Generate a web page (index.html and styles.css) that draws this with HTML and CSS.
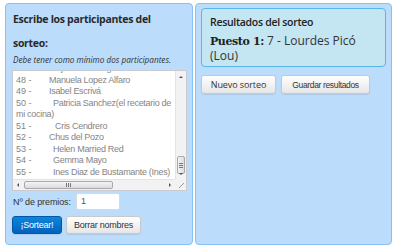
FILE: index.html
```html
<!DOCTYPE html>
<html lang="es">
<head>
<meta charset="utf-8">
<link rel="stylesheet" href="styles.css">
</head>
<body>
<div class="page">
  <section class="panel left">
    <h2 class="title">Escribe los participantes del sorteo:</h2>
    <p class="hint">Debe tener como mínimo dos participantes.</p>
    <div class="textarea">
      <div class="lines">
        <div class="ln"><span class="num">47 -</span><span class="nm">Alejandra Rodriguez Fernandez</span></div>
        <div class="ln"><span class="num">48 -</span><span class="nm">Manuela Lopez Alfaro</span></div>
        <div class="ln"><span class="num">49 -</span><span class="nm">Isabel Escrivá</span></div>
        <div class="ln"><span class="num">50 -</span><span class="nm n2">Patricia Sanchez(el recetario de</span></div>
        <div class="ln">mi cocina)</div>
        <div class="ln"><span class="num">51 -</span><span class="nm n3">Cris Cendrero</span></div>
        <div class="ln"><span class="num">52 -</span><span class="nm">Chus del Pozo</span></div>
        <div class="ln"><span class="num">53 -</span><span class="nm n2">Helen Married Red</span></div>
        <div class="ln"><span class="num">54 -</span><span class="nm n2">Gemma Mayo</span></div>
        <div class="ln"><span class="num">55 -</span><span class="nm n2">Ines Diaz de Bustamante (Ines)</span></div>
      </div>
      <div class="vbar">
        <span class="arr up"></span>
        <span class="vthumb"><i></i><i></i><i></i></span>
        <span class="arr down"></span>
      </div>
      <div class="hbar">
        <span class="arr lft"></span>
        <span class="hthumb"><i></i><i></i><i></i></span>
        <span class="arr rgt"></span>
      </div>
      <div class="corner"></div>
    </div>
    <div class="prizes">
      <label class="plabel">Nº de premios:</label>
      <div class="input">1</div>
    </div>
    <div class="actions">
      <button class="btn primary">¡Sortear!</button>
      <button class="btn b3">Borrar nombres</button>
    </div>
  </section>
  <section class="panel right">
    <div class="result">
      <h3 class="rtitle">Resultados del sorteo</h3>
      <p class="rline"><b>Puesto 1:</b> 7 - Lourdes Picó (Lou)</p>
    </div>
    <div class="ractions">
      <button class="btn b2">Nuevo sorteo</button>
      <button class="btn b4">Guardar resultados</button>
    </div>
  </section>
</div>
</body>
</html>
```
FILE: styles.css
```css
* { box-sizing: border-box; }
html, body { margin: 0; padding: 0; background: #fff; }
body { font-family: "Liberation Sans", Arial, sans-serif; }
.page {
  display: flex;
  gap: 2px;
  padding: 3px 0 0 5px;
  width: 400px;
  height: 252px;
}
.panel {
  background: #bcdcfb;
  border: 1px solid #86c0f4;
  border-radius: 4px;
  height: 242px;
}
.left { width: 188px; padding: 3px 6px 0 6px; }
.right { width: 197px; padding: 4px 5px 0 5px; }
.title {
  margin: 0;
  width: 150px;
  font-family: "Open Sans", sans-serif;
  font-weight: 700;
  font-size: 10.5px;
  letter-spacing: -0.3px;
  line-height: 24px;
  color: #2a2a2a;
  padding-left: 1px;
}
.hint {
  margin: 0 0 5px 1px;
  font-family: "Open Sans", sans-serif;
  font-style: italic;
  font-size: 8.2px;
  line-height: 10px;
  color: #333;
  white-space: nowrap;
}
.textarea {
  position: relative;
  width: 175px;
  height: 121px;
  background: #fff;
  border: 1px solid #c8ccd2;
  overflow: hidden;
}
.lines {
  position: absolute;
  left: 3px;
  top: -8px;
  right: 12px;
  font-size: 9px;
  letter-spacing: -0.3px;
  color: #858585;
  line-height: 11.5px;
  white-space: nowrap;
}
.num { display: inline-block; width: 33px; letter-spacing: 0; }
.n2 { padding-left: 4px; }
.n3 { padding-left: 6px; }
.vbar {
  position: absolute;
  right: 0;
  top: 0;
  width: 11px;
  bottom: 11px;
  background: #f2f2f2;
  border-left: 1px solid #e4e4e4;
}
.hbar {
  position: absolute;
  left: 0;
  bottom: 0;
  height: 11px;
  right: 11px;
  background: #f2f2f2;
  border-top: 1px solid #e4e4e4;
}
.corner {
  position: absolute;
  right: 0;
  bottom: 0;
  width: 11px;
  height: 11px;
  background: #f2f2f2;
}
.corner::after {
  content: "";
  position: absolute;
  right: 2px;
  bottom: 2px;
  width: 5px;
  height: 5px;
  background: linear-gradient(135deg, transparent 45%, #999 46%, #999 54%, transparent 55%, transparent 70%, #999 71%, #999 79%, transparent 80%);
}
.arr { position: absolute; width: 0; height: 0; }
.up { top: 5px; left: 3px; border-left: 2px solid transparent; border-right: 2px solid transparent; border-bottom: 2px solid #555; }
.down { bottom: 4px; left: 3px; border-left: 2px solid transparent; border-right: 2px solid transparent; border-top: 2px solid #555; }
.lft { left: 4px; top: 3px; border-top: 2px solid transparent; border-bottom: 2px solid transparent; border-right: 2px solid #555; }
.rgt { right: 4px; top: 3px; border-top: 2px solid transparent; border-bottom: 2px solid transparent; border-left: 2px solid #555; }
.vthumb {
  position: absolute;
  left: 1px;
  right: 1px;
  top: 85px;
  height: 18px;
  background: linear-gradient(to right, #f4f4f4, #dcdcdc);
  border: 1px solid #a9a9a9;
  border-radius: 2px;
  display: flex;
  flex-direction: column;
  align-items: center;
  justify-content: center;
  gap: 1px;
}
.vthumb i { display: block; width: 4px; height: 1px; background: #777; }
.hthumb {
  position: absolute;
  top: 1px;
  bottom: 1px;
  left: 11px;
  width: 89px;
  background: linear-gradient(#f4f4f4, #dcdcdc);
  border: 1px solid #a9a9a9;
  border-radius: 2px;
  display: flex;
  align-items: center;
  justify-content: center;
  gap: 1px;
}
.hthumb i { display: block; width: 1px; height: 4px; background: #777; }
.prizes {
  display: flex;
  align-items: center;
  margin-top: 2px;
  height: 17px;
}
.plabel {
  font-size: 9px;
  letter-spacing: -0.1px;
  color: #333;
  width: 64px;
  padding-left: 1px;
  white-space: nowrap;
}
.input {
  width: 44px;
  height: 17px;
  background: #fff;
  border: 1px solid #d6d9de;
  border-radius: 2px;
  font-size: 9px;
  color: #555;
  line-height: 15px;
  padding-left: 4px;
}
.actions {
  display: flex;
  gap: 4px;
  margin-top: 6px;
}
.btn {
  font-family: "Liberation Sans", Arial, sans-serif;
  font-size: 9px;
  letter-spacing: -0.25px;
  height: 18px;
  padding: 0;
  color: #333;
  border: 1px solid #c9c9c9;
  border-radius: 3px;
  background: linear-gradient(#ffffff, #e6e6e6);
  box-shadow: 0 1px 1px rgba(0,0,0,0.08);
  line-height: 16px;
  margin: 0;
}
.primary {
  color: #fff;
  background: linear-gradient(#0e85dc, #0062bd);
  border-color: #0059a8;
  width: 50px;
}
.b3 { width: 75px; }
.b2 {
  font-family: "Open Sans", sans-serif;
  font-size: 9px;
  letter-spacing: -0.1px;
  width: 75px;
  height: 19px;
}
.b4 {
  font-size: 8.5px;
  letter-spacing: -0.35px;
  width: 89px;
  height: 19px;
}
.result {
  background: #c4e5f2;
  border: 1px solid #5cb6e3;
  border-radius: 4px;
  height: 59px;
  padding: 5px 8px 0 8px;
}
.rtitle {
  margin: 0;
  font-family: "Open Sans", sans-serif;
  font-weight: 600;
  font-size: 10.5px;
  letter-spacing: -0.3px;
  line-height: 16px;
  color: #222;
}
.rline {
  margin: 4px 0 0 0;
  font-family: "Open Sans", sans-serif;
  font-size: 12px;
  line-height: 14px;
  color: #333;
}
.rline b {
  font-family: "DejaVu Serif", serif;
  font-size: 11px;
  letter-spacing: -0.4px;
  color: #222;
}
.ractions {
  display: flex;
  gap: 5px;
  margin-top: 8px;
}
```
